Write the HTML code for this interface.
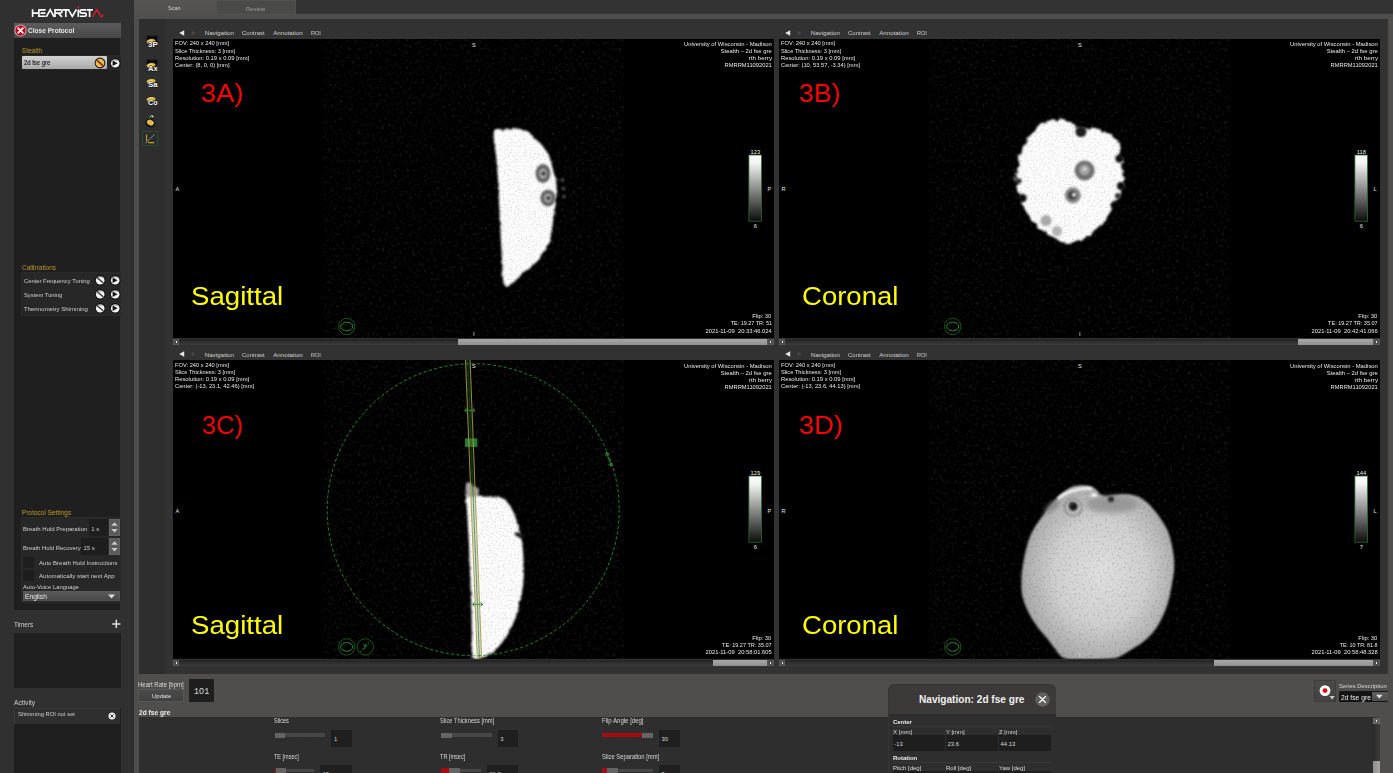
<!DOCTYPE html>
<html><head><meta charset="utf-8"><title>HeartVista</title>
<style>
html,body{margin:0;padding:0}
body{width:1393px;height:773px;position:relative;overflow:hidden;background:#303030;font-family:"Liberation Sans",sans-serif;}
span{display:inline-block}
</style></head>
<body>
<div style="position:absolute;left:134.20px;top:0.00px;width:1258.80px;height:773.00px;background:#4f4e4c;"></div>
<div style="position:absolute;left:134.20px;top:0.00px;width:81.80px;height:19.30px;background:linear-gradient(#565553,#4f4e4c);"></div>
<div style="position:absolute;left:296.00px;top:0.00px;width:1097.00px;height:14.40px;background:#333;"></div>
<div style="position:absolute;left:215.60px;top:0.00px;width:80.40px;height:14.60px;background:#4a4a48;box-shadow:inset 0 0 0 0.7px #555452"></div>
<span style="position:absolute;left:168.10px;transform-origin:0 50%;top:5.30px;font-size:6.2px;line-height:1;color:#d6d6d6;transform:scaleX(0.8986);white-space:pre;">Scan</span>
<span style="position:absolute;left:246.00px;transform-origin:0 50%;top:5.60px;font-size:6.2px;line-height:1;color:#9c9c9c;transform:scaleX(0.9494);white-space:pre;">Review</span>
<div style="position:absolute;left:139.00px;top:19.30px;width:1249.00px;height:654.60px;background:#323232;"></div>
<div style="position:absolute;left:139.00px;top:19.30px;width:25.50px;height:654.60px;background:#2e2e2e;"></div>
<div style="position:absolute;left:164.50px;top:19.30px;width:1223.50px;height:654.60px;background:#323232;"></div>
<svg style="position:absolute;left:143.6px;top:34.2px" width="16" height="16" viewBox="-8 -8 16 16"><rect x="-5.4" y="-6.2" width="10.8" height="6" fill="#0a0a0a"/><ellipse cx="-0.8" cy="-0.9" rx="4.5" ry="2.2" transform="rotate(-10)" fill="#d9b53a"/><ellipse cx="-1.4" cy="-1.4" rx="2.6" ry="1.2" transform="rotate(-12)" fill="#f0d469"/><text x="0.9" y="4.6" font-family="Liberation Sans" font-weight="700" font-size="7.0" text-anchor="middle" fill="#fff" stroke="#111" stroke-width="0.9" paint-order="stroke" textLength="9.6" lengthAdjust="spacingAndGlyphs">3P</text></svg>
<svg style="position:absolute;left:143.8px;top:57.599999999999994px" width="16" height="16" viewBox="-8 -8 16 16"><rect x="-5.4" y="-6.2" width="10.8" height="6" fill="#0a0a0a"/><ellipse cx="-0.8" cy="-0.9" rx="4.5" ry="2.2" transform="rotate(-10)" fill="#d9b53a"/><ellipse cx="-1.4" cy="-1.4" rx="2.6" ry="1.2" transform="rotate(-12)" fill="#f0d469"/><text x="0.9" y="4.6" font-family="Liberation Sans" font-weight="700" font-size="7.0" text-anchor="middle" fill="#fff" stroke="#111" stroke-width="0.9" paint-order="stroke" textLength="9.6" lengthAdjust="spacingAndGlyphs">Ax</text></svg>
<svg style="position:absolute;left:143.8px;top:74.4px" width="16" height="16" viewBox="-8 -8 16 16"><ellipse cx="-0.8" cy="-0.9" rx="4.5" ry="2.2" transform="rotate(-10)" fill="#d9b53a"/><ellipse cx="-1.4" cy="-1.4" rx="2.6" ry="1.2" transform="rotate(-12)" fill="#f0d469"/><text x="0.9" y="4.6" font-family="Liberation Sans" font-weight="700" font-size="7.0" text-anchor="middle" fill="#fff" stroke="#111" stroke-width="0.9" paint-order="stroke" textLength="9.6" lengthAdjust="spacingAndGlyphs">Sa</text></svg>
<svg style="position:absolute;left:143.8px;top:92px" width="16" height="16" viewBox="-8 -8 16 16"><ellipse cx="-0.8" cy="-0.9" rx="4.5" ry="2.2" transform="rotate(-10)" fill="#d9b53a"/><ellipse cx="-1.4" cy="-1.4" rx="2.6" ry="1.2" transform="rotate(-12)" fill="#f0d469"/><text x="0.9" y="4.6" font-family="Liberation Sans" font-weight="700" font-size="7.0" text-anchor="middle" fill="#fff" stroke="#111" stroke-width="0.9" paint-order="stroke" textLength="9.6" lengthAdjust="spacingAndGlyphs">Co</text></svg>
<svg style="position:absolute;left:143px;top:112px" width="16" height="18" viewBox="143 112 16 18">
<ellipse cx="150.4" cy="123" rx="4.2" ry="3.4" transform="rotate(25 150.4 123)" fill="#0c0c0c" stroke="#0c0c0c" stroke-width="1.6"/>
<ellipse cx="150.4" cy="122.6" rx="3.6" ry="2.7" transform="rotate(25 150.4 122.6)" fill="#e0bd3e"/>
<path d="M149.6 117.4Q151 114.6 153.4 116.4" stroke="#ddd" stroke-width="0.9" fill="none"/><path d="M152.4 115.2L153.8 116.8L151.8 117.4Z" fill="#ddd"/></svg>
<div style="position:absolute;left:142.10px;top:130.90px;width:15.90px;height:15.40px;background:#2b2b2b;border-radius:1px;box-shadow:inset 0 0 0 0.8px #28582c"></div>
<svg style="position:absolute;left:142px;top:131px" width="16" height="16" viewBox="142 131 16 16">
<path d="M146.6 134.4V141.2M148.2 142.6H154.2" stroke="#c2a22e" stroke-width="1.1" fill="none"/><path d="M145.4 143.4L154.6 134.2" stroke="#b8b8b8" stroke-width="0.7"/></svg>
<span style="position:absolute;left:138.40px;transform-origin:0 50%;top:681.90px;font-size:6.4px;line-height:1;color:#d8d8d8;transform:scaleX(0.9378);white-space:pre;">Heart Rate [bpm]</span>
<div style="position:absolute;left:138.40px;top:689.20px;width:45.90px;height:13.30px;background:linear-gradient(#4b4b4b,#404040);border-radius:1.5px;box-shadow:inset 0 0 0 0.7px #5e5e5c"></div>
<span style="position:absolute;left:151.80px;transform-origin:0 50%;top:693.40px;font-size:6.2px;line-height:1;color:#e0e0e0;transform:scaleX(0.9653);white-space:pre;">Update</span>
<div style="position:absolute;left:189.30px;top:679.40px;width:24.80px;height:22.50px;background:#1e1e1e;"></div>
<span style="position:absolute;left:193.90px;transform-origin:0 50%;top:687.30px;font-size:9.3px;line-height:1;color:#dcdcdc;font-family:'Liberation Mono';transform:scaleX(0.9078);white-space:pre;">1O1</span>
<span style="position:absolute;left:139.30px;transform-origin:0 50%;top:708.70px;font-size:7.2px;line-height:1;color:#ececec;font-weight:700;transform:scaleX(0.9231);white-space:pre;">2d fse gre</span>
<div style="position:absolute;left:139.00px;top:716.80px;width:1241.00px;height:56.30px;background:#2e2e2e;"></div>
<span style="position:absolute;left:273.90px;transform-origin:0 50%;top:718.00px;font-size:6.7px;line-height:1;color:#d8d8d8;transform:scaleX(0.8336);white-space:pre;">Slices</span>
<div style="position:absolute;left:274.60px;top:733.30px;width:50.40px;height:3.90px;background:#474747;"></div><div style="position:absolute;left:274.60px;top:732.80px;width:10.80px;height:5.00px;background:#646464;"></div><div style="position:absolute;left:280.70px;top:740.20px;width:0.70px;height:1.80px;background:#2a2a2a;"></div><div style="position:absolute;left:293.90px;top:740.20px;width:0.70px;height:1.80px;background:#2a2a2a;"></div><div style="position:absolute;left:307.60px;top:740.20px;width:0.70px;height:1.80px;background:#2a2a2a;"></div><div style="position:absolute;left:320.40px;top:740.20px;width:0.70px;height:1.80px;background:#2a2a2a;"></div>
<div style="position:absolute;left:331.40px;top:729.50px;width:20.30px;height:17.10px;background:#1f1f1f;"></div>
<span style="position:absolute;left:334.00px;transform-origin:0 50%;top:736.80px;font-size:5.9px;line-height:1;color:#d8d8d8;white-space:pre;">1</span>
<span style="position:absolute;left:273.90px;transform-origin:0 50%;top:753.50px;font-size:6.7px;line-height:1;color:#d8d8d8;transform:scaleX(0.8257);white-space:pre;">TE [msec]</span>
<div style="position:absolute;left:274.60px;top:768.60px;width:39.40px;height:3.90px;background:#474747;"></div><div style="position:absolute;left:274.60px;top:768.30px;width:0.90px;height:4.40px;background:#a80a12;"></div><div style="position:absolute;left:275.50px;top:768.10px;width:10.50px;height:5.00px;background:#646464;"></div>
<div style="position:absolute;left:320.30px;top:765.00px;width:31.40px;height:8.00px;background:#1f1f1f;"></div>
<span style="position:absolute;left:322.80px;transform-origin:0 50%;top:772.20px;font-size:5.9px;line-height:1;color:#d8d8d8;white-space:pre;">15</span>
<span style="position:absolute;left:440.00px;transform-origin:0 50%;top:718.00px;font-size:6.7px;line-height:1;color:#d8d8d8;transform:scaleX(0.8596);white-space:pre;">Slice Thickness [mm]</span>
<div style="position:absolute;left:441.00px;top:733.30px;width:51.10px;height:3.90px;background:#474747;"></div><div style="position:absolute;left:441.00px;top:732.80px;width:10.70px;height:5.00px;background:#646464;"></div><div style="position:absolute;left:446.30px;top:740.20px;width:0.70px;height:1.80px;background:#2a2a2a;"></div><div style="position:absolute;left:487.30px;top:740.20px;width:0.70px;height:1.80px;background:#2a2a2a;"></div>
<div style="position:absolute;left:498.10px;top:729.50px;width:20.00px;height:17.10px;background:#1f1f1f;"></div>
<span style="position:absolute;left:500.20px;transform-origin:0 50%;top:736.80px;font-size:5.9px;line-height:1;color:#d8d8d8;white-space:pre;">3</span>
<span style="position:absolute;left:440.00px;transform-origin:0 50%;top:753.50px;font-size:6.7px;line-height:1;color:#d8d8d8;transform:scaleX(0.8289);white-space:pre;">TR [msec]</span>
<div style="position:absolute;left:441.00px;top:768.60px;width:40.00px;height:3.90px;background:#474747;"></div><div style="position:absolute;left:441.00px;top:768.30px;width:8.00px;height:4.40px;background:#a80a12;"></div><div style="position:absolute;left:449.00px;top:768.10px;width:11.00px;height:5.00px;background:#646464;"></div>
<div style="position:absolute;left:487.10px;top:765.00px;width:31.00px;height:8.00px;background:#1f1f1f;"></div>
<span style="position:absolute;left:489.40px;transform-origin:0 50%;top:772.20px;font-size:5.9px;line-height:1;color:#d8d8d8;white-space:pre;">81.8</span>
<span style="position:absolute;left:601.70px;transform-origin:0 50%;top:718.00px;font-size:6.7px;line-height:1;color:#d8d8d8;transform:scaleX(0.9007);white-space:pre;">Flip Angle [deg]</span>
<div style="position:absolute;left:602.40px;top:733.30px;width:50.90px;height:3.90px;background:#474747;"></div><div style="position:absolute;left:602.40px;top:733.00px;width:40.00px;height:4.40px;background:#a80a12;"></div><div style="position:absolute;left:642.40px;top:732.80px;width:10.90px;height:5.00px;background:#646464;"></div><div style="position:absolute;left:608.00px;top:740.20px;width:0.70px;height:1.80px;background:#2a2a2a;"></div><div style="position:absolute;left:610.35px;top:740.20px;width:0.70px;height:1.80px;background:#2a2a2a;"></div><div style="position:absolute;left:612.70px;top:740.20px;width:0.70px;height:1.80px;background:#2a2a2a;"></div><div style="position:absolute;left:615.05px;top:740.20px;width:0.70px;height:1.80px;background:#2a2a2a;"></div><div style="position:absolute;left:617.40px;top:740.20px;width:0.70px;height:1.80px;background:#2a2a2a;"></div><div style="position:absolute;left:619.75px;top:740.20px;width:0.70px;height:1.80px;background:#2a2a2a;"></div><div style="position:absolute;left:622.10px;top:740.20px;width:0.70px;height:1.80px;background:#2a2a2a;"></div><div style="position:absolute;left:624.45px;top:740.20px;width:0.70px;height:1.80px;background:#2a2a2a;"></div><div style="position:absolute;left:626.80px;top:740.20px;width:0.70px;height:1.80px;background:#2a2a2a;"></div><div style="position:absolute;left:629.15px;top:740.20px;width:0.70px;height:1.80px;background:#2a2a2a;"></div><div style="position:absolute;left:631.50px;top:740.20px;width:0.70px;height:1.80px;background:#2a2a2a;"></div><div style="position:absolute;left:633.85px;top:740.20px;width:0.70px;height:1.80px;background:#2a2a2a;"></div><div style="position:absolute;left:636.20px;top:740.20px;width:0.70px;height:1.80px;background:#2a2a2a;"></div><div style="position:absolute;left:638.55px;top:740.20px;width:0.70px;height:1.80px;background:#2a2a2a;"></div><div style="position:absolute;left:640.90px;top:740.20px;width:0.70px;height:1.80px;background:#2a2a2a;"></div><div style="position:absolute;left:643.25px;top:740.20px;width:0.70px;height:1.80px;background:#2a2a2a;"></div><div style="position:absolute;left:645.60px;top:740.20px;width:0.70px;height:1.80px;background:#2a2a2a;"></div><div style="position:absolute;left:647.95px;top:740.20px;width:0.70px;height:1.80px;background:#2a2a2a;"></div>
<div style="position:absolute;left:659.30px;top:729.50px;width:20.40px;height:17.10px;background:#1f1f1f;"></div>
<span style="position:absolute;left:661.50px;transform-origin:0 50%;top:736.80px;font-size:5.9px;line-height:1;color:#d8d8d8;white-space:pre;">30</span>
<span style="position:absolute;left:601.70px;transform-origin:0 50%;top:753.50px;font-size:6.7px;line-height:1;color:#d8d8d8;transform:scaleX(0.8743);white-space:pre;">Slice Separation [mm]</span>
<div style="position:absolute;left:602.40px;top:768.60px;width:50.90px;height:3.90px;background:#474747;"></div><div style="position:absolute;left:602.40px;top:768.30px;width:5.00px;height:4.40px;background:#a80a12;"></div><div style="position:absolute;left:607.40px;top:768.10px;width:10.70px;height:5.00px;background:#646464;"></div>
<div style="position:absolute;left:659.30px;top:765.00px;width:20.40px;height:8.00px;background:#1f1f1f;"></div>
<span style="position:absolute;left:661.50px;transform-origin:0 50%;top:772.20px;font-size:5.9px;line-height:1;color:#d8d8d8;white-space:pre;">3</span>
<div style="position:absolute;left:1373.30px;top:716.70px;width:6.40px;height:56.30px;background:linear-gradient(90deg,#2a2a2a,#3a3a3a);"></div>
<div style="position:absolute;left:1373.40px;top:717.80px;width:6.20px;height:6.30px;background:#5c5c5c;box-shadow:inset 0 0 0 0.6px #777"></div>
<div style="position:absolute;left:1375.70px;top:720.20px;width:1.60px;height:1.60px;background:#eee;"></div>
<div style="position:absolute;left:1373.40px;top:761.00px;width:6.20px;height:12.00px;background:linear-gradient(90deg,#8e8e8e,#a6a6a6);"></div>
<div style="position:absolute;left:1313.70px;top:679.70px;width:22.70px;height:22.30px;background:linear-gradient(#4a4a4a,#424242);border-radius:1.5px;box-shadow:inset 0 0 0 0.7px #3a3a3a"></div>
<svg style="position:absolute;left:1316px;top:682px" width="20" height="19" viewBox="1316 682 20 19">
<circle cx="1325" cy="690.6" r="5.4" fill="#fff"/><circle cx="1325" cy="690.6" r="2.4" fill="#e30613"/><path d="M1329.4 696L1334.8 696L1332.1 699.4Z" fill="#c8c8c8"/></svg>
<span style="position:absolute;left:1339.30px;transform-origin:0 50%;top:682.80px;font-size:6.2px;line-height:1;color:#d8d8d8;transform:scaleX(0.9501);white-space:pre;">Series Description</span>
<div style="position:absolute;left:1339.00px;top:691.00px;width:49.20px;height:11.20px;background:#141414;border-radius:1.5px"></div>
<div style="position:absolute;left:1371.80px;top:691.70px;width:15.80px;height:9.80px;background:linear-gradient(#5e5e5e,#4c4c4c);border-radius:0 1px 1px 0"></div>
<span style="position:absolute;left:1340.70px;transform-origin:0 50%;top:694.90px;font-size:6.8px;line-height:1;color:#ececec;transform:scaleX(0.9920);white-space:pre;">2d fse gre</span>
<svg style="position:absolute;left:1375px;top:693.4px" width="9" height="7" viewBox="0 0 9 7"><path d="M1 1.8H7.6L4.3 5.6Z" fill="#e2e2e2"/></svg>
<div style="position:absolute;left:887.90px;top:683.90px;width:168.60px;height:90.00px;background:#363535;border-radius:6px 6px 0 0"></div>
<div style="position:absolute;left:888.50px;top:684.50px;width:167.40px;height:29.60px;background:#3b3a39;border-radius:5.5px 5.5px 0 0"></div>
<div style="position:absolute;left:888.50px;top:714.10px;width:167.40px;height:60.00px;background:#2e2e2e;"></div>
<span style="position:absolute;left:919.00px;transform-origin:0 50%;top:695.40px;font-size:10.1px;line-height:1;color:#f0f0f0;font-weight:700;white-space:pre;">Navigation: 2d fse gre</span>
<svg style="position:absolute;left:1034.5px;top:691.5px" width="15" height="15" viewBox="-7.5 -7.5 15 15">
<circle r="7.2" fill="#616161"/><path d="M-3 -3L3 3M3 -3L-3 3" stroke="#fff" stroke-width="1.15" stroke-linecap="round"/></svg>
<span style="position:absolute;left:892.90px;transform-origin:0 50%;top:719.30px;font-size:6.2px;line-height:1;color:#ececec;font-weight:700;transform:scaleX(0.9624);white-space:pre;">Center</span>
<div style="position:absolute;left:892.90px;top:726.20px;width:158.20px;height:0.60px;background:#383838;"></div>
<span style="position:absolute;left:892.90px;transform-origin:0 50%;top:728.50px;font-size:6.2px;line-height:1;color:#d8d8d8;transform:scaleX(0.9780);white-space:pre;">X [mm]</span>
<span style="position:absolute;left:946.00px;transform-origin:0 50%;top:728.50px;font-size:6.2px;line-height:1;color:#d8d8d8;transform:scaleX(0.9529);white-space:pre;">Y [mm]</span>
<span style="position:absolute;left:998.90px;transform-origin:0 50%;top:728.50px;font-size:6.2px;line-height:1;color:#d8d8d8;transform:scaleX(0.9541);white-space:pre;">Z [mm]</span>
<div style="position:absolute;left:892.90px;top:735.30px;width:51.90px;height:15.40px;background:#1e1e1e;"></div>
<span style="position:absolute;left:894.30px;transform-origin:0 50%;top:742.20px;font-size:5.9px;line-height:1;color:#d8d8d8;white-space:pre;">-13</span>
<div style="position:absolute;left:946.20px;top:735.30px;width:51.50px;height:15.40px;background:#1e1e1e;"></div>
<span style="position:absolute;left:947.60px;transform-origin:0 50%;top:742.20px;font-size:5.9px;line-height:1;color:#d8d8d8;white-space:pre;">23.6</span>
<div style="position:absolute;left:999.20px;top:735.30px;width:51.90px;height:15.40px;background:#1e1e1e;"></div>
<span style="position:absolute;left:1000.60px;transform-origin:0 50%;top:742.20px;font-size:5.9px;line-height:1;color:#d8d8d8;white-space:pre;">44.13</span>
<span style="position:absolute;left:892.90px;transform-origin:0 50%;top:755.00px;font-size:6.2px;line-height:1;color:#ececec;font-weight:700;transform:scaleX(0.9666);white-space:pre;">Rotation</span>
<div style="position:absolute;left:892.90px;top:762.00px;width:158.20px;height:0.60px;background:#383838;"></div>
<span style="position:absolute;left:892.90px;transform-origin:0 50%;top:764.50px;font-size:6.2px;line-height:1;color:#d8d8d8;transform:scaleX(0.9694);white-space:pre;">Pitch [deg]</span>
<span style="position:absolute;left:946.00px;transform-origin:0 50%;top:764.50px;font-size:6.2px;line-height:1;color:#d8d8d8;transform:scaleX(0.9659);white-space:pre;">Roll [deg]</span>
<span style="position:absolute;left:998.90px;transform-origin:0 50%;top:764.50px;font-size:6.2px;line-height:1;color:#d8d8d8;transform:scaleX(0.9589);white-space:pre;">Yaw [deg]</span>
<div style="position:absolute;left:892.90px;top:771.20px;width:51.90px;height:3.00px;background:#1e1e1e;"></div>
<div style="position:absolute;left:946.20px;top:771.20px;width:51.50px;height:3.00px;background:#1e1e1e;"></div>
<div style="position:absolute;left:999.20px;top:771.20px;width:51.90px;height:3.00px;background:#1e1e1e;"></div>
<svg width="0" height="0" style="position:absolute"><defs>
<filter id="bgn" x="0" y="0" width="100%" height="100%" color-interpolation-filters="sRGB">
<feTurbulence type="fractalNoise" baseFrequency="0.33" numOctaves="2" seed="7"/>
<feColorMatrix type="matrix" values="0.26 0 0 0 -0.138  0.26 0 0 0 -0.138  0.26 0 0 0 -0.138  0 0 0 0 1"/>
</filter>
<filter id="blob" x="-10%" y="-10%" width="120%" height="120%" color-interpolation-filters="sRGB">
<feTurbulence type="fractalNoise" baseFrequency="0.22" numOctaves="2" seed="9" result="dn"/>
<feDisplacementMap in="SourceGraphic" in2="dn" scale="3.2" xChannelSelector="R" yChannelSelector="G" result="d"/>
<feGaussianBlur in="d" stdDeviation="1.0" result="b"/>
<feTurbulence type="fractalNoise" baseFrequency="0.6" numOctaves="2" seed="11" result="n"/>
<feColorMatrix in="n" type="matrix" values="0.4 0 0 0 0.8  0.4 0 0 0 0.8  0.4 0 0 0 0.8  0 0 0 0 1" result="ng"/>
<feComposite in="b" in2="ng" operator="arithmetic" k1="1" k2="0" k3="0" k4="0"/>
</filter>
<filter id="blobR" x="-10%" y="-10%" width="120%" height="120%" color-interpolation-filters="sRGB">
<feTurbulence type="fractalNoise" baseFrequency="0.16" numOctaves="2" seed="4" result="dn"/>
<feDisplacementMap in="SourceGraphic" in2="dn" scale="7" xChannelSelector="R" yChannelSelector="G" result="d"/>
<feGaussianBlur in="d" stdDeviation="1.1" result="b"/>
<feTurbulence type="fractalNoise" baseFrequency="0.6" numOctaves="2" seed="11" result="n"/>
<feColorMatrix in="n" type="matrix" values="0.4 0 0 0 0.8  0.4 0 0 0 0.8  0.4 0 0 0 0.8  0 0 0 0 1" result="ng"/>
<feComposite in="b" in2="ng" operator="arithmetic" k1="1" k2="0" k3="0" k4="0"/>
</filter>
<filter id="blobD" x="-10%" y="-10%" width="120%" height="120%" color-interpolation-filters="sRGB">
<feGaussianBlur in="SourceGraphic" stdDeviation="1.1" result="b"/>
<feTurbulence type="fractalNoise" baseFrequency="0.42" numOctaves="2" seed="5" result="n"/>
<feColorMatrix in="n" type="matrix" values="0.36 0 0 0 0.82  0.36 0 0 0 0.82  0.36 0 0 0 0.82  0 0 0 0 1" result="ng"/>
<feComposite in="b" in2="ng" operator="arithmetic" k1="1" k2="0" k3="0" k4="0"/>
</filter>
<filter id="soft" x="-30%" y="-30%" width="160%" height="160%"><feGaussianBlur stdDeviation="1.2"/></filter>
<filter id="soft2" x="-30%" y="-30%" width="160%" height="160%"><feGaussianBlur stdDeviation="2.5"/></filter>
<linearGradient id="sbar" x1="0" y1="0" x2="0" y2="1"><stop offset="0" stop-color="#fff"/><stop offset="0.12" stop-color="#f4f4f4"/><stop offset="1" stop-color="#0c0c0c"/></linearGradient>
<radialGradient id="gD" cx="0.52" cy="0.5" r="0.6"><stop offset="0" stop-color="#e0e0e0"/><stop offset="0.5" stop-color="#d0d0d0"/><stop offset="1" stop-color="#9c9c9c"/></radialGradient>
</defs></svg>
<svg style="position:absolute;left:178px;top:28.7px" width="22" height="8" viewBox="0 0 22 8"><path d="M1.2 4L6.2 1.2V6.8Z" fill="#e8e8e8"/><path d="M17.6 4L13.6 1.6V6.4Z" fill="#454545"/></svg>
<span style="position:absolute;left:204.70px;transform-origin:0 50%;top:30.10px;font-size:6.2px;line-height:1;color:#cfcfcf;white-space:pre;">Navigation</span>
<span style="position:absolute;left:241.70px;transform-origin:0 50%;top:30.10px;font-size:6.2px;line-height:1;color:#cfcfcf;transform:scaleX(0.9730);white-space:pre;">Contrast</span>
<span style="position:absolute;left:273.20px;transform-origin:0 50%;top:30.10px;font-size:6.2px;line-height:1;color:#cfcfcf;white-space:pre;">Annotation</span>
<span style="position:absolute;left:311.20px;transform-origin:0 50%;top:30.10px;font-size:6.2px;line-height:1;color:#cfcfcf;transform:scaleX(0.8890);white-space:pre;">ROI</span>
<svg style="position:absolute;left:173px;top:38.9px" width="601.0" height="299.4" viewBox="0 0 601.0 299.4"><rect width="601.0" height="299.4" fill="#000"/><rect x="150.5" y="0" width="300" height="299.4" fill="#000" filter="url(#bgn)"/><path d="M321.0 92.6C322.4 87.8 328.2 91.1 332.0 90.6C335.8 90.1 340.2 89.1 344.0 89.6C347.8 90.1 351.7 91.7 355.0 93.6C358.3 95.5 361.2 98.3 364.0 101.1C366.8 103.8 369.8 107.1 372.0 110.1C374.2 113.1 375.7 115.6 377.0 119.1C378.3 122.6 378.9 126.6 380.0 131.1C381.1 135.6 383.0 141.1 383.5 146.1C384.0 151.1 383.3 156.6 383.0 161.1C382.7 165.6 382.1 168.9 381.5 173.1C380.9 177.3 380.3 181.1 379.5 186.1C378.7 191.1 378.1 198.4 376.5 203.1C374.9 207.8 372.2 210.8 370.0 214.1C367.8 217.4 365.8 220.6 363.5 223.1C361.2 225.6 358.4 227.1 356.0 229.1C353.6 231.1 351.3 233.0 349.0 235.1C346.7 237.2 344.1 239.6 342.0 241.6C339.9 243.6 338.2 246.3 336.5 247.1C334.8 247.9 333.1 247.8 332.0 246.6C330.9 245.4 330.5 244.3 330.0 240.1C329.5 235.8 329.3 227.3 329.0 221.1C328.7 214.9 328.4 211.1 328.0 203.1C327.6 195.1 326.9 182.6 326.5 173.1C326.1 163.6 325.8 155.1 325.3 146.1C324.8 137.1 324.0 128.0 323.3 119.1C322.6 110.2 319.6 97.3 321.0 92.6Z" fill="#fdfdfd" filter="url(#blob)"/><ellipse cx="370" cy="134.5" rx="7.4" ry="9.6" fill="#5f5f5f" filter="url(#soft)"/><ellipse cx="370" cy="134.5" rx="4.07" ry="5.28" fill="#a9a9a9" filter="url(#soft)"/><ellipse cx="370.5" cy="134.5" rx="2.22" ry="2.112" fill="#333" filter="url(#soft)"/><ellipse cx="375" cy="159.1" rx="7.6" ry="8.4" fill="#5f5f5f" filter="url(#soft)"/><ellipse cx="375" cy="159.1" rx="4.18" ry="4.620000000000001" fill="#a9a9a9" filter="url(#soft)"/><ellipse cx="375.5" cy="159.1" rx="2.28" ry="1.848" fill="#333" filter="url(#soft)"/><circle cx="389.5" cy="141.1" r="1.8" fill="#555" filter="url(#soft)"/><circle cx="390.5" cy="149.6" r="1.8" fill="#555" filter="url(#soft)"/><circle cx="391" cy="157.6" r="1.8" fill="#555" filter="url(#soft)"/><rect x="575.9" y="116" width="12.7" height="66.2" fill="url(#sbar)" stroke="#2c6a30" stroke-width="0.8"/><circle cx="173.7" cy="287.5" r="8.2" fill="none" stroke="#1f6a24" stroke-width="0.8"/><ellipse cx="173.7" cy="287.5" rx="6.1" ry="4.3" fill="none" stroke="#2a8a30" stroke-width="1"/></svg>
<span style="position:absolute;left:174.90px;transform-origin:0 50%;top:40.30px;font-size:6.2px;line-height:1;color:#e8e8e8;transform:scaleX(0.9218);white-space:pre;">FOV: 240 x 240 [mm]</span>
<span style="position:absolute;left:174.90px;transform-origin:0 50%;top:47.50px;font-size:6.2px;line-height:1;color:#e8e8e8;transform:scaleX(0.9227);white-space:pre;">Slice Thickness: 3 [mm]</span>
<span style="position:absolute;left:174.90px;transform-origin:0 50%;top:54.70px;font-size:6.2px;line-height:1;color:#e8e8e8;transform:scaleX(0.9415);white-space:pre;">Resolution: 0.19 x 0.09 [mm]</span>
<span style="position:absolute;left:174.90px;transform-origin:0 50%;top:62.00px;font-size:6.2px;line-height:1;color:#e8e8e8;transform:scaleX(0.9267);white-space:pre;">Center: (8, 0, 0) [mm]</span>
<span style="position:absolute;right:621.20px;transform-origin:100% 50%;top:41.20px;font-size:6.2px;line-height:1;color:#e8e8e8;transform:scaleX(0.9460);white-space:pre;">University of Wisconsin - Madison</span>
<span style="position:absolute;right:621.20px;transform-origin:100% 50%;top:48.20px;font-size:6.2px;line-height:1;color:#e8e8e8;transform:scaleX(0.9485);white-space:pre;">Stealth – 2d fse gre</span>
<span style="position:absolute;right:621.20px;transform-origin:100% 50%;top:55.20px;font-size:6.2px;line-height:1;color:#e8e8e8;transform:scaleX(1.0137);white-space:pre;">rth berry</span>
<span style="position:absolute;right:621.20px;transform-origin:100% 50%;top:62.20px;font-size:6.2px;line-height:1;color:#e8e8e8;transform:scaleX(0.9295);white-space:pre;">RMRRM11092021</span>
<span style="position:absolute;right:621.30px;transform-origin:100% 50%;top:313.20px;font-size:6.2px;line-height:1;color:#e8e8e8;transform:scaleX(0.9345);white-space:pre;">Flip: 30</span>
<span style="position:absolute;right:621.30px;transform-origin:100% 50%;top:320.30px;font-size:6.2px;line-height:1;color:#e8e8e8;transform:scaleX(0.8769);white-space:pre;">TE: 19.27 TR: 51</span>
<span style="position:absolute;right:621.30px;transform-origin:100% 50%;top:327.60px;font-size:6.2px;line-height:1;color:#e8e8e8;transform:scaleX(0.9365);white-space:pre;">2021-11-09  20:33:46.024</span>
<span style="position:absolute;left:471.90px;transform-origin:0 50%;top:42.90px;font-size:5.6px;line-height:1;color:#e8e8e8;white-space:pre;">S</span>
<span style="position:absolute;left:472.90px;transform-origin:0 50%;top:331.90px;font-size:5.6px;line-height:1;color:#e8e8e8;white-space:pre;">I</span>
<span style="position:absolute;left:175.60px;transform-origin:0 50%;top:187.30px;font-size:5.6px;line-height:1;color:#e8e8e8;white-space:pre;">A</span>
<span style="position:absolute;left:767.60px;transform-origin:0 50%;top:187.30px;font-size:5.6px;line-height:1;color:#e8e8e8;white-space:pre;">P</span>
<span style="position:absolute;left:750.46px;transform-origin:50% 50%;top:149.70px;font-size:5.8px;line-height:1;color:#e8e8e8;white-space:pre;">123</span>
<span style="position:absolute;left:753.69px;transform-origin:50% 50%;top:223.50px;font-size:5.8px;line-height:1;color:#e8e8e8;white-space:pre;">6</span>
<span style="position:absolute;left:200.90px;transform-origin:0 50%;top:81.20px;font-size:25.9px;line-height:1;color:#f00;transform:scaleX(1.0569);white-space:pre;">3A)</span>
<span style="position:absolute;left:190.90px;transform-origin:0 50%;top:283.10px;font-size:26px;line-height:1;color:#ff0;transform:scaleX(1.0632);white-space:pre;">Sagittal</span>
<div style="position:absolute;left:173.00px;top:339.00px;width:601.00px;height:5.90px;background:linear-gradient(#222,#3c3c3c);"></div>
<div style="position:absolute;left:457.60px;top:339.00px;width:309.50px;height:5.90px;background:linear-gradient(#a8a8a8,#909090);"></div>
<div style="position:absolute;left:173.30px;top:339.00px;width:6.20px;height:5.90px;background:#4c4c4c;box-shadow:inset 0 0 0 0.6px #5e5e5e"></div>
<div style="position:absolute;left:175.50px;top:341.10px;width:1.70px;height:1.70px;background:#eee;"></div>
<div style="position:absolute;left:767.40px;top:339.00px;width:6.20px;height:5.90px;background:#4c4c4c;box-shadow:inset 0 0 0 0.6px #5e5e5e"></div>
<div style="position:absolute;left:769.60px;top:341.10px;width:1.70px;height:1.70px;background:#eee;"></div>
<svg style="position:absolute;left:784px;top:28.7px" width="22" height="8" viewBox="0 0 22 8"><path d="M1.2 4L6.2 1.2V6.8Z" fill="#e8e8e8"/><path d="M17.6 4L13.6 1.6V6.4Z" fill="#454545"/></svg>
<span style="position:absolute;left:810.70px;transform-origin:0 50%;top:30.10px;font-size:6.2px;line-height:1;color:#cfcfcf;white-space:pre;">Navigation</span>
<span style="position:absolute;left:847.70px;transform-origin:0 50%;top:30.10px;font-size:6.2px;line-height:1;color:#cfcfcf;transform:scaleX(0.9730);white-space:pre;">Contrast</span>
<span style="position:absolute;left:879.20px;transform-origin:0 50%;top:30.10px;font-size:6.2px;line-height:1;color:#cfcfcf;white-space:pre;">Annotation</span>
<span style="position:absolute;left:917.20px;transform-origin:0 50%;top:30.10px;font-size:6.2px;line-height:1;color:#cfcfcf;transform:scaleX(0.8890);white-space:pre;">ROI</span>
<svg style="position:absolute;left:779px;top:38.9px" width="601.0" height="299.4" viewBox="0 0 601.0 299.4"><rect width="601.0" height="299.4" fill="#000"/><rect x="150.5" y="0" width="300" height="299.4" fill="#000" filter="url(#bgn)"/><path d="M271.0 80.8C274.6 80.0 279.7 80.1 283.5 80.8C287.3 81.5 290.9 83.7 294.0 85.1C297.1 86.5 299.3 88.3 302.0 89.1C304.7 89.8 307.6 89.3 310.4 89.6C313.2 89.9 316.2 90.3 319.0 91.1C321.8 91.8 324.5 92.8 327.0 94.1C329.5 95.3 331.9 96.8 334.0 98.6C336.1 100.3 338.1 101.7 339.4 104.6C340.7 107.5 341.3 112.0 342.0 116.1C342.7 120.2 343.2 125.6 343.5 129.4C343.8 133.2 344.0 136.0 344.0 139.1C344.0 142.2 344.2 145.1 343.5 148.1C342.8 151.1 341.4 154.3 340.0 157.1C338.6 159.8 336.8 161.6 335.0 164.6C333.2 167.6 331.5 171.7 329.5 175.1C327.5 178.5 325.0 182.3 322.8 185.1C320.5 187.9 318.4 190.0 316.0 192.1C313.6 194.2 311.3 196.0 308.3 197.7C305.3 199.4 301.4 201.1 298.0 202.1C294.6 203.1 290.6 204.0 287.6 203.9C284.6 203.8 282.4 202.6 280.0 201.6C277.6 200.6 275.7 199.3 273.0 197.7C270.3 196.1 266.8 194.2 264.0 192.1C261.2 190.0 259.0 187.9 256.5 185.1C254.0 182.3 251.1 178.5 249.0 175.1C246.9 171.7 245.5 168.1 244.0 164.6C242.5 161.1 241.0 157.5 240.0 154.1C239.0 150.7 238.4 146.9 238.0 143.9C237.6 140.9 237.5 138.5 237.5 136.1C237.5 133.7 237.5 132.4 238.0 129.4C238.5 126.4 239.5 121.5 240.5 118.1C241.5 114.6 242.7 111.7 244.0 108.7C245.3 105.7 246.8 102.9 248.5 100.1C250.2 97.3 252.2 94.5 254.5 92.1C256.8 89.7 259.2 87.5 262.0 85.6C264.8 83.7 267.4 81.6 271.0 80.8Z" fill="#fdfdfd" filter="url(#blobR)"/><circle cx="302" cy="92.6" r="5.5" fill="#1a1a1a" filter="url(#soft)"/><circle cx="340.5" cy="119.6" r="4.2" fill="#111" filter="url(#soft)"/><circle cx="342" cy="147.1" r="4" fill="#111" filter="url(#soft)"/><circle cx="243.5" cy="159.1" r="4.2" fill="#111" filter="url(#soft)"/><circle cx="240" cy="142.1" r="2.5" fill="#222" filter="url(#soft)"/><circle cx="339" cy="157.1" r="3" fill="#333" filter="url(#soft)"/><circle cx="267" cy="181.6" r="5.5" fill="#a8a8a8" filter="url(#soft)"/><circle cx="278" cy="192.1" r="5" fill="#b4b4b4" filter="url(#soft)"/><circle cx="305.5999999999999" cy="131.5" r="10" fill="#6e6e6e" filter="url(#soft)"/><circle cx="305.5999999999999" cy="130.9" r="5.3" fill="#a5a5a5" filter="url(#soft)"/><circle cx="305.5999999999999" cy="130.1" r="1.6" fill="#e8e8e8" filter="url(#soft)"/><circle cx="293.79999999999995" cy="156.29999999999998" r="8" fill="#858585" filter="url(#soft)"/><circle cx="293.29999999999995" cy="156.29999999999998" r="4.3" fill="#3c3c3c" filter="url(#soft)"/><circle cx="295" cy="155.7" r="2" fill="#f4f4f4" filter="url(#soft)"/><rect x="575.9" y="116" width="12.7" height="66.2" fill="url(#sbar)" stroke="#2c6a30" stroke-width="0.8"/><circle cx="173.7" cy="287.5" r="8.2" fill="none" stroke="#1f6a24" stroke-width="0.8"/><ellipse cx="173.7" cy="287.5" rx="6.1" ry="4.3" fill="none" stroke="#2a8a30" stroke-width="1"/></svg>
<span style="position:absolute;left:780.90px;transform-origin:0 50%;top:40.30px;font-size:6.2px;line-height:1;color:#e8e8e8;transform:scaleX(0.9218);white-space:pre;">FOV: 240 x 240 [mm]</span>
<span style="position:absolute;left:780.90px;transform-origin:0 50%;top:47.50px;font-size:6.2px;line-height:1;color:#e8e8e8;transform:scaleX(0.9227);white-space:pre;">Slice Thickness: 3 [mm]</span>
<span style="position:absolute;left:780.90px;transform-origin:0 50%;top:54.70px;font-size:6.2px;line-height:1;color:#e8e8e8;transform:scaleX(0.9415);white-space:pre;">Resolution: 0.19 x 0.09 [mm]</span>
<span style="position:absolute;left:780.90px;transform-origin:0 50%;top:62.00px;font-size:6.2px;line-height:1;color:#e8e8e8;transform:scaleX(0.9305);white-space:pre;">Center: (10, 53.57, -3.34) [mm]</span>
<span style="position:absolute;right:15.20px;transform-origin:100% 50%;top:41.20px;font-size:6.2px;line-height:1;color:#e8e8e8;transform:scaleX(0.9460);white-space:pre;">University of Wisconsin - Madison</span>
<span style="position:absolute;right:15.20px;transform-origin:100% 50%;top:48.20px;font-size:6.2px;line-height:1;color:#e8e8e8;transform:scaleX(0.9485);white-space:pre;">Stealth – 2d fse gre</span>
<span style="position:absolute;right:15.20px;transform-origin:100% 50%;top:55.20px;font-size:6.2px;line-height:1;color:#e8e8e8;transform:scaleX(1.0137);white-space:pre;">rth berry</span>
<span style="position:absolute;right:15.20px;transform-origin:100% 50%;top:62.20px;font-size:6.2px;line-height:1;color:#e8e8e8;transform:scaleX(0.9295);white-space:pre;">RMRRM11092021</span>
<span style="position:absolute;right:15.30px;transform-origin:100% 50%;top:313.20px;font-size:6.2px;line-height:1;color:#e8e8e8;transform:scaleX(0.9345);white-space:pre;">Flip: 30</span>
<span style="position:absolute;right:15.30px;transform-origin:100% 50%;top:320.30px;font-size:6.2px;line-height:1;color:#e8e8e8;transform:scaleX(0.8902);white-space:pre;">TE: 19.27 TR: 35.07</span>
<span style="position:absolute;right:15.30px;transform-origin:100% 50%;top:327.60px;font-size:6.2px;line-height:1;color:#e8e8e8;transform:scaleX(0.9365);white-space:pre;">2021-11-09  20:42:41.066</span>
<span style="position:absolute;left:1077.90px;transform-origin:0 50%;top:42.90px;font-size:5.6px;line-height:1;color:#e8e8e8;white-space:pre;">S</span>
<span style="position:absolute;left:1078.90px;transform-origin:0 50%;top:331.90px;font-size:5.6px;line-height:1;color:#e8e8e8;white-space:pre;">I</span>
<span style="position:absolute;left:781.60px;transform-origin:0 50%;top:187.30px;font-size:5.6px;line-height:1;color:#e8e8e8;white-space:pre;">R</span>
<span style="position:absolute;left:1373.60px;transform-origin:0 50%;top:187.30px;font-size:5.6px;line-height:1;color:#e8e8e8;white-space:pre;">L</span>
<span style="position:absolute;left:1356.68px;transform-origin:50% 50%;top:149.70px;font-size:5.8px;line-height:1;color:#e8e8e8;white-space:pre;">118</span>
<span style="position:absolute;left:1359.69px;transform-origin:50% 50%;top:223.50px;font-size:5.8px;line-height:1;color:#e8e8e8;white-space:pre;">6</span>
<span style="position:absolute;left:798.60px;transform-origin:0 50%;top:81.20px;font-size:25.9px;line-height:1;color:#f00;transform:scaleX(1.0346);white-space:pre;">3B)</span>
<span style="position:absolute;left:802.10px;transform-origin:0 50%;top:283.10px;font-size:26px;line-height:1;color:#ff0;transform:scaleX(1.0587);white-space:pre;">Coronal</span>
<div style="position:absolute;left:779.00px;top:339.00px;width:601.00px;height:5.90px;background:linear-gradient(#222,#3c3c3c);"></div>
<div style="position:absolute;left:1297.60px;top:339.00px;width:75.50px;height:5.90px;background:linear-gradient(#a8a8a8,#909090);"></div>
<div style="position:absolute;left:779.30px;top:339.00px;width:6.20px;height:5.90px;background:#4c4c4c;box-shadow:inset 0 0 0 0.6px #5e5e5e"></div>
<div style="position:absolute;left:781.50px;top:341.10px;width:1.70px;height:1.70px;background:#eee;"></div>
<div style="position:absolute;left:1373.40px;top:339.00px;width:6.20px;height:5.90px;background:#4c4c4c;box-shadow:inset 0 0 0 0.6px #5e5e5e"></div>
<div style="position:absolute;left:1375.60px;top:341.10px;width:1.70px;height:1.70px;background:#eee;"></div>
<svg style="position:absolute;left:178px;top:350.1px" width="22" height="8" viewBox="0 0 22 8"><path d="M1.2 4L6.2 1.2V6.8Z" fill="#e8e8e8"/><path d="M17.6 4L13.6 1.6V6.4Z" fill="#454545"/></svg>
<span style="position:absolute;left:204.70px;transform-origin:0 50%;top:351.50px;font-size:6.2px;line-height:1;color:#cfcfcf;white-space:pre;">Navigation</span>
<span style="position:absolute;left:241.70px;transform-origin:0 50%;top:351.50px;font-size:6.2px;line-height:1;color:#cfcfcf;transform:scaleX(0.9730);white-space:pre;">Contrast</span>
<span style="position:absolute;left:273.20px;transform-origin:0 50%;top:351.50px;font-size:6.2px;line-height:1;color:#cfcfcf;white-space:pre;">Annotation</span>
<span style="position:absolute;left:311.20px;transform-origin:0 50%;top:351.50px;font-size:6.2px;line-height:1;color:#cfcfcf;transform:scaleX(0.8890);white-space:pre;">ROI</span>
<svg style="position:absolute;left:173px;top:360.3px" width="601.0" height="298.8" viewBox="0 0 601.0 298.8"><rect width="601.0" height="298.8" fill="#000"/><rect x="150.5" y="0" width="300" height="298.8" fill="#000" filter="url(#bgn)"/><path d="M294.0 134.7C295.0 134.7 297.1 133.6 299.0 133.7C300.9 133.8 303.3 134.7 305.5 135.2C307.7 135.7 309.8 136.5 312.4 136.7C315.0 136.9 318.1 135.9 321.0 136.2C323.9 136.4 327.2 137.3 329.5 138.2C331.8 139.1 333.1 140.2 334.5 141.7C335.9 143.2 336.8 144.9 338.0 147.2C339.2 149.5 340.8 152.7 342.0 155.7C343.2 158.7 344.1 162.0 345.0 165.2C345.9 168.4 346.8 171.4 347.5 174.7C348.2 178.0 348.9 180.8 349.4 185.0C349.9 189.2 350.3 194.9 350.5 199.7C350.7 204.4 350.9 209.2 350.8 213.5C350.7 217.8 350.5 221.9 350.0 225.7C349.5 229.5 348.8 232.3 348.0 236.3C347.2 240.3 346.2 245.5 345.0 249.7C343.8 253.9 342.4 257.9 340.9 261.7C339.4 265.4 337.9 268.9 336.0 272.2C334.1 275.5 331.7 278.9 329.5 281.7C327.3 284.5 325.4 286.9 323.0 289.2C320.6 291.4 318.0 293.8 315.3 295.2C312.6 296.6 309.6 297.4 307.0 297.7C304.4 298.0 301.0 301.9 299.6 297.2C298.2 292.5 299.0 278.9 298.8 269.7C298.6 260.4 298.5 251.2 298.2 241.7C297.9 232.2 297.4 222.2 297.0 212.7C296.6 203.2 296.3 192.2 296.0 184.7C295.7 177.2 295.3 173.4 295.0 167.7C294.7 162.0 294.4 156.4 294.0 150.7C293.6 145.0 292.8 136.4 292.8 133.7C292.8 131.0 293.0 134.7 294.0 134.7Z" fill="#fdfdfd" filter="url(#blob)"/><ellipse cx="346.5" cy="175.2" rx="5" ry="2.2" transform="rotate(25 346.5 175.2)" fill="#151515" filter="url(#soft)"/><path d="M293.2 122.69999999999999L297 122.19999999999999L300 125.69999999999999L305.5 128.2L306 131.7L304 136.7L294 136.7L292.6 129.7Z" fill="#a6a6a6" filter="url(#soft)"/><circle cx="300.2" cy="149.7" r="146" fill="none" stroke="#2f8f35" stroke-width="0.9" stroke-dasharray="3.2 2.2"/><rect x="291.9" y="78.39999999999998" width="12.5" height="8.5" fill="#2a8434" opacity="0.92"/><path d="M292.5 0.0L304.3 297.49999999999994L308.59999999999997 297.49999999999994L297.1 0.0" fill="rgba(50,130,60,0.2)" stroke="#a99a34" stroke-width="0.9"/><line x1="294.8" y1="0.0" x2="306.45" y2="297.49999999999994" stroke="#1c4a26" stroke-width="0.9" opacity="0.6"/><path d="M291.8 50.30000000000001H301.8M293.8 48.30000000000001L291.6 50.30000000000001L293.8 52.30000000000001M299.8 48.30000000000001L302.0 50.30000000000001L299.8 52.30000000000001" stroke="#2f8f35" stroke-width="1" fill="none"/><path d="M299.6 244.3H309.6M301.6 242.3L299.40000000000003 244.3L301.6 246.3M307.6 242.3L309.8 244.3L307.6 246.3" stroke="#2f8f35" stroke-width="1" fill="none"/><path d="M433.29999999999995 92.19999999999999L438.4 106.19999999999999M432.6 95.69999999999999L433.29999999999995 92.19999999999999L436.20000000000005 94.30000000000001M435.4 104.30000000000001L438.4 106.19999999999999L439 102.69999999999999" stroke="#2f8f35" stroke-width="1" fill="none"/><rect x="575.9" y="116" width="12.7" height="66.2" fill="url(#sbar)" stroke="#2c6a30" stroke-width="0.8"/><circle cx="173.7" cy="286.90000000000003" r="8.2" fill="none" stroke="#1f6a24" stroke-width="0.8"/><ellipse cx="173.7" cy="286.90000000000003" rx="6.1" ry="4.3" fill="none" stroke="#2a8a30" stroke-width="1"/><circle cx="192.2" cy="286.90000000000003" r="8.2" fill="none" stroke="#1f6a24" stroke-width="0.8"/><path d="M186.8 292.50000000000006L197.8 281.50000000000006" stroke="#2a8a30" stroke-width="0.9" stroke-dasharray="2.4 1.4"/><path d="M190 284.1L192 286.50000000000006L193.6 283.50000000000006M192 286.50000000000006L191 289.3" stroke="#2a8a30" stroke-width="0.9" fill="none"/></svg>
<span style="position:absolute;left:174.90px;transform-origin:0 50%;top:361.70px;font-size:6.2px;line-height:1;color:#e8e8e8;transform:scaleX(0.9218);white-space:pre;">FOV: 240 x 240 [mm]</span>
<span style="position:absolute;left:174.90px;transform-origin:0 50%;top:368.90px;font-size:6.2px;line-height:1;color:#e8e8e8;transform:scaleX(0.9227);white-space:pre;">Slice Thickness: 3 [mm]</span>
<span style="position:absolute;left:174.90px;transform-origin:0 50%;top:376.10px;font-size:6.2px;line-height:1;color:#e8e8e8;transform:scaleX(0.9415);white-space:pre;">Resolution: 0.19 x 0.09 [mm]</span>
<span style="position:absolute;left:174.90px;transform-origin:0 50%;top:383.40px;font-size:6.2px;line-height:1;color:#e8e8e8;transform:scaleX(0.9305);white-space:pre;">Center: (-13, 23.1, 42.46) [mm]</span>
<span style="position:absolute;right:621.20px;transform-origin:100% 50%;top:362.60px;font-size:6.2px;line-height:1;color:#e8e8e8;transform:scaleX(0.9460);white-space:pre;">University of Wisconsin - Madison</span>
<span style="position:absolute;right:621.20px;transform-origin:100% 50%;top:369.60px;font-size:6.2px;line-height:1;color:#e8e8e8;transform:scaleX(0.9485);white-space:pre;">Stealth – 2d fse gre</span>
<span style="position:absolute;right:621.20px;transform-origin:100% 50%;top:376.60px;font-size:6.2px;line-height:1;color:#e8e8e8;transform:scaleX(1.0137);white-space:pre;">rth berry</span>
<span style="position:absolute;right:621.20px;transform-origin:100% 50%;top:383.60px;font-size:6.2px;line-height:1;color:#e8e8e8;transform:scaleX(0.9295);white-space:pre;">RMRRM11092021</span>
<span style="position:absolute;right:621.30px;transform-origin:100% 50%;top:634.80px;font-size:6.2px;line-height:1;color:#e8e8e8;transform:scaleX(0.9345);white-space:pre;">Flip: 30</span>
<span style="position:absolute;right:621.30px;transform-origin:100% 50%;top:642.00px;font-size:6.2px;line-height:1;color:#e8e8e8;transform:scaleX(0.8902);white-space:pre;">TE: 19.27 TR: 35.07</span>
<span style="position:absolute;right:621.30px;transform-origin:100% 50%;top:649.20px;font-size:6.2px;line-height:1;color:#e8e8e8;transform:scaleX(0.9365);white-space:pre;">2021-11-09  20:58:01.605</span>
<span style="position:absolute;left:471.90px;transform-origin:0 50%;top:364.30px;font-size:5.6px;line-height:1;color:#e8e8e8;white-space:pre;">S</span>
<span style="position:absolute;left:472.90px;transform-origin:0 50%;top:652.70px;font-size:5.6px;line-height:1;color:#e8e8e8;white-space:pre;">I</span>
<span style="position:absolute;left:175.60px;transform-origin:0 50%;top:508.70px;font-size:5.6px;line-height:1;color:#e8e8e8;white-space:pre;">A</span>
<span style="position:absolute;left:767.60px;transform-origin:0 50%;top:508.70px;font-size:5.6px;line-height:1;color:#e8e8e8;white-space:pre;">P</span>
<span style="position:absolute;left:750.46px;transform-origin:50% 50%;top:471.10px;font-size:5.8px;line-height:1;color:#e8e8e8;white-space:pre;">129</span>
<span style="position:absolute;left:753.69px;transform-origin:50% 50%;top:544.90px;font-size:5.8px;line-height:1;color:#e8e8e8;white-space:pre;">6</span>
<span style="position:absolute;left:201.90px;transform-origin:0 50%;top:413.20px;font-size:25.9px;line-height:1;color:#f00;transform:scaleX(0.9920);white-space:pre;">3C)</span>
<span style="position:absolute;left:190.90px;transform-origin:0 50%;top:612.10px;font-size:26px;line-height:1;color:#ff0;transform:scaleX(1.0632);white-space:pre;">Sagittal</span>
<div style="position:absolute;left:173.00px;top:659.80px;width:601.00px;height:5.90px;background:linear-gradient(#222,#3c3c3c);"></div>
<div style="position:absolute;left:712.90px;top:659.80px;width:54.20px;height:5.90px;background:linear-gradient(#a8a8a8,#909090);"></div>
<div style="position:absolute;left:173.30px;top:659.80px;width:6.20px;height:5.90px;background:#4c4c4c;box-shadow:inset 0 0 0 0.6px #5e5e5e"></div>
<div style="position:absolute;left:175.50px;top:661.90px;width:1.70px;height:1.70px;background:#eee;"></div>
<div style="position:absolute;left:767.40px;top:659.80px;width:6.20px;height:5.90px;background:#4c4c4c;box-shadow:inset 0 0 0 0.6px #5e5e5e"></div>
<div style="position:absolute;left:769.60px;top:661.90px;width:1.70px;height:1.70px;background:#eee;"></div>
<svg style="position:absolute;left:784px;top:350.1px" width="22" height="8" viewBox="0 0 22 8"><path d="M1.2 4L6.2 1.2V6.8Z" fill="#e8e8e8"/><path d="M17.6 4L13.6 1.6V6.4Z" fill="#454545"/></svg>
<span style="position:absolute;left:810.70px;transform-origin:0 50%;top:351.50px;font-size:6.2px;line-height:1;color:#cfcfcf;white-space:pre;">Navigation</span>
<span style="position:absolute;left:847.70px;transform-origin:0 50%;top:351.50px;font-size:6.2px;line-height:1;color:#cfcfcf;transform:scaleX(0.9730);white-space:pre;">Contrast</span>
<span style="position:absolute;left:879.20px;transform-origin:0 50%;top:351.50px;font-size:6.2px;line-height:1;color:#cfcfcf;white-space:pre;">Annotation</span>
<span style="position:absolute;left:917.20px;transform-origin:0 50%;top:351.50px;font-size:6.2px;line-height:1;color:#cfcfcf;transform:scaleX(0.8890);white-space:pre;">ROI</span>
<svg style="position:absolute;left:779px;top:360.3px" width="601.0" height="298.8" viewBox="0 0 601.0 298.8"><rect width="601.0" height="298.8" fill="#000"/><rect x="150.5" y="0" width="300" height="298.8" fill="#000" filter="url(#bgn)"/><path d="M290.9 127.7C293.2 126.4 294.9 126.1 297.0 125.7C299.1 125.3 301.5 125.1 303.8 125.2C306.1 125.3 308.8 125.5 311.0 126.2C313.2 126.8 315.0 127.8 316.7 129.1C318.4 130.4 319.3 133.0 321.0 134.2C322.7 135.4 324.8 136.0 327.0 136.2C329.2 136.4 331.4 135.5 334.0 135.2C336.6 134.9 339.6 134.4 342.6 134.3C345.6 134.2 349.0 134.2 352.0 134.7C355.0 135.2 357.9 135.8 360.7 137.2C363.5 138.6 366.4 140.9 369.0 143.2C371.6 145.5 373.7 148.2 376.0 151.1C378.3 154.0 380.8 157.3 383.0 160.7C385.2 164.1 387.4 167.7 389.0 171.7C390.6 175.7 391.8 180.4 392.8 184.7C393.8 189.0 394.5 193.4 394.9 197.7C395.3 202.0 395.3 206.4 395.0 210.7C394.7 215.0 393.8 219.2 393.0 223.5C392.2 227.8 391.6 232.4 390.5 236.7C389.4 241.0 388.2 245.2 386.6 249.4C385.0 253.6 383.1 257.8 381.0 261.7C378.9 265.6 376.7 269.2 373.7 272.7C370.7 276.2 366.9 279.7 363.0 282.7C359.1 285.7 353.7 288.6 350.4 290.7C347.1 292.8 345.6 293.9 343.0 295.2C340.4 296.4 340.1 297.5 334.8 298.2C329.5 298.9 319.2 299.2 311.0 299.2C302.8 299.2 291.5 299.9 285.7 298.2C279.9 296.4 279.0 292.1 276.0 288.7C273.0 285.3 270.4 281.2 267.6 277.7C264.8 274.2 261.6 271.1 259.0 267.7C256.4 264.3 254.1 260.9 252.0 257.2C249.9 253.5 248.0 249.6 246.5 245.7C245.0 241.8 243.7 238.4 243.0 233.7C242.3 229.0 242.3 222.9 242.5 217.7C242.7 212.5 243.5 207.4 244.3 202.7C245.0 198.0 245.9 194.0 247.0 189.7C248.1 185.4 249.3 180.8 250.8 177.0C252.3 173.2 254.1 169.9 256.0 166.7C257.9 163.5 260.3 160.6 262.4 157.6C264.5 154.6 266.4 151.5 268.5 148.7C270.6 145.9 272.9 143.3 275.3 140.7C277.7 138.1 280.4 135.4 283.0 133.2C285.6 131.0 288.6 128.9 290.9 127.7Z" fill="url(#gD)" filter="url(#blobD)"/><ellipse cx="333" cy="144.2" rx="26" ry="8.5" fill="#8c8c8c" opacity="0.75" filter="url(#soft2)"/><ellipse cx="273" cy="146.2" rx="9" ry="3.5" transform="rotate(-40 273 146.2)" fill="#777" opacity="0.8" filter="url(#soft2)"/><circle cx="332" cy="139.2" r="3" fill="#2a2a2a" filter="url(#soft)"/><ellipse cx="315" cy="135.2" rx="3" ry="1.6" fill="#fff" filter="url(#soft)"/><path d="M279 138.7Q293 127.19999999999999 313 128.7" stroke="#f2f2f2" stroke-width="3" fill="none" filter="url(#soft)"/><circle cx="294.20000000000005" cy="147.2" r="8.6" fill="none" stroke="#7e7e7e" stroke-width="1.3" filter="url(#soft)"/><circle cx="294.29999999999995" cy="146.5" r="4.2" fill="#161616" filter="url(#soft)"/><circle cx="292.5" cy="144.2" r="1.6" fill="#333" filter="url(#soft)"/><rect x="575.9" y="116" width="12.7" height="66.2" fill="url(#sbar)" stroke="#2c6a30" stroke-width="0.8"/><circle cx="173.7" cy="286.90000000000003" r="8.2" fill="none" stroke="#1f6a24" stroke-width="0.8"/><ellipse cx="173.7" cy="286.90000000000003" rx="6.1" ry="4.3" fill="none" stroke="#2a8a30" stroke-width="1"/></svg>
<span style="position:absolute;left:780.90px;transform-origin:0 50%;top:361.70px;font-size:6.2px;line-height:1;color:#e8e8e8;transform:scaleX(0.9218);white-space:pre;">FOV: 240 x 240 [mm]</span>
<span style="position:absolute;left:780.90px;transform-origin:0 50%;top:368.90px;font-size:6.2px;line-height:1;color:#e8e8e8;transform:scaleX(0.9227);white-space:pre;">Slice Thickness: 3 [mm]</span>
<span style="position:absolute;left:780.90px;transform-origin:0 50%;top:376.10px;font-size:6.2px;line-height:1;color:#e8e8e8;transform:scaleX(0.9415);white-space:pre;">Resolution: 0.19 x 0.09 [mm]</span>
<span style="position:absolute;left:780.90px;transform-origin:0 50%;top:383.40px;font-size:6.2px;line-height:1;color:#e8e8e8;transform:scaleX(0.9305);white-space:pre;">Center: (-13, 23.6, 44.13) [mm]</span>
<span style="position:absolute;right:15.20px;transform-origin:100% 50%;top:362.60px;font-size:6.2px;line-height:1;color:#e8e8e8;transform:scaleX(0.9460);white-space:pre;">University of Wisconsin - Madison</span>
<span style="position:absolute;right:15.20px;transform-origin:100% 50%;top:369.60px;font-size:6.2px;line-height:1;color:#e8e8e8;transform:scaleX(0.9485);white-space:pre;">Stealth – 2d fse gre</span>
<span style="position:absolute;right:15.20px;transform-origin:100% 50%;top:376.60px;font-size:6.2px;line-height:1;color:#e8e8e8;transform:scaleX(1.0137);white-space:pre;">rth berry</span>
<span style="position:absolute;right:15.20px;transform-origin:100% 50%;top:383.60px;font-size:6.2px;line-height:1;color:#e8e8e8;transform:scaleX(0.9295);white-space:pre;">RMRRM11092021</span>
<span style="position:absolute;right:15.30px;transform-origin:100% 50%;top:634.80px;font-size:6.2px;line-height:1;color:#e8e8e8;transform:scaleX(0.9345);white-space:pre;">Flip: 30</span>
<span style="position:absolute;right:15.30px;transform-origin:100% 50%;top:642.00px;font-size:6.2px;line-height:1;color:#e8e8e8;transform:scaleX(0.8705);white-space:pre;">TE: 10 TR: 81.8</span>
<span style="position:absolute;right:15.30px;transform-origin:100% 50%;top:649.20px;font-size:6.2px;line-height:1;color:#e8e8e8;transform:scaleX(0.9365);white-space:pre;">2021-11-09  20:58:48.328</span>
<span style="position:absolute;left:1077.90px;transform-origin:0 50%;top:364.30px;font-size:5.6px;line-height:1;color:#e8e8e8;white-space:pre;">S</span>
<span style="position:absolute;left:1078.90px;transform-origin:0 50%;top:652.70px;font-size:5.6px;line-height:1;color:#e8e8e8;white-space:pre;">I</span>
<span style="position:absolute;left:781.60px;transform-origin:0 50%;top:508.70px;font-size:5.6px;line-height:1;color:#e8e8e8;white-space:pre;">R</span>
<span style="position:absolute;left:1373.60px;transform-origin:0 50%;top:508.70px;font-size:5.6px;line-height:1;color:#e8e8e8;white-space:pre;">L</span>
<span style="position:absolute;left:1356.46px;transform-origin:50% 50%;top:471.10px;font-size:5.8px;line-height:1;color:#e8e8e8;white-space:pre;">144</span>
<span style="position:absolute;left:1359.69px;transform-origin:50% 50%;top:544.90px;font-size:5.8px;line-height:1;color:#e8e8e8;white-space:pre;">7</span>
<span style="position:absolute;left:798.60px;transform-origin:0 50%;top:413.20px;font-size:25.9px;line-height:1;color:#f00;transform:scaleX(1.0591);white-space:pre;">3D)</span>
<span style="position:absolute;left:802.10px;transform-origin:0 50%;top:612.10px;font-size:26px;line-height:1;color:#ff0;transform:scaleX(1.0587);white-space:pre;">Coronal</span>
<div style="position:absolute;left:779.00px;top:659.80px;width:601.00px;height:5.90px;background:linear-gradient(#222,#3c3c3c);"></div>
<div style="position:absolute;left:1214.20px;top:659.80px;width:158.90px;height:5.90px;background:linear-gradient(#a8a8a8,#909090);"></div>
<div style="position:absolute;left:779.30px;top:659.80px;width:6.20px;height:5.90px;background:#4c4c4c;box-shadow:inset 0 0 0 0.6px #5e5e5e"></div>
<div style="position:absolute;left:781.50px;top:661.90px;width:1.70px;height:1.70px;background:#eee;"></div>
<div style="position:absolute;left:1373.40px;top:659.80px;width:6.20px;height:5.90px;background:#4c4c4c;box-shadow:inset 0 0 0 0.6px #5e5e5e"></div>
<div style="position:absolute;left:1375.60px;top:661.90px;width:1.70px;height:1.70px;background:#eee;"></div>
<svg width="0" height="0" style="position:absolute"><defs><linearGradient id="icg" x1="0" y1="0" x2="0" y2="1"><stop offset="0" stop-color="#7c7c7c"/><stop offset="0.3" stop-color="#f0f0f0"/><stop offset="1" stop-color="#fafafa"/></linearGradient></defs></svg>
<svg style="position:absolute;left:28px;top:4px" width="80" height="16" viewBox="28 4 80 16">
<g fill="none" stroke="#fff" stroke-width="1.65" stroke-linejoin="miter">
<path d="M32.6 9.2V16.9M32.6 13.1H39M38.9 9.2V16.9"/>
<path d="M39 9.9H45.6M40.5 13.1H45.4M39 16.2H45.6"/>
<path d="M46.3 16.9L50.2 9.8L54.1 16.9"/>
<path d="M55 16.9V9.9H60.4Q62 9.9 62 11.5Q62 13.1 60.4 13.1H55.6M58.3 13.1L62 16.9"/>
<path d="M62.4 9.9H69.2M65.8 9.9V16.9"/>
<path d="M68.2 9.3L72.3 16.4L76.4 9.3"/>
<path d="M78.3 9.6V16.9"/>
<path d="M86.2 9.9H81.4Q80 9.9 80 11.5Q80 13.1 81.4 13.1H84.9Q86.3 13.1 86.3 14.7Q86.3 16.2 84.9 16.2H79.8"/>
<path d="M86.6 9.9H92.8M89.6 9.9V16.9"/>
</g>
<path d="M92.3 16.9L97 9.6L100.4 15.7Q101.9 18 103.2 14.6" fill="none" stroke="#e3182a" stroke-width="1.5"/>
<circle cx="78.3" cy="7.3" r="0.95" fill="#e3182a"/>
</svg>
<div style="position:absolute;left:13.90px;top:23.40px;width:106.80px;height:14.40px;background:linear-gradient(#5c5c5c,#474747);"></div>
<svg style="position:absolute;left:14px;top:24.3px" width="13" height="13" viewBox="-6.5 -6.5 13 13">
<circle r="6" fill="#d9c6c8"/><circle r="5.2" fill="#bf0a20"/>
<path d="M-2.4 -2.4L2.4 2.4M2.4 -2.4L-2.4 2.4" stroke="#fff" stroke-width="1.6" stroke-linecap="round"/></svg>
<span style="position:absolute;left:27.80px;transform-origin:0 50%;top:27.40px;font-size:7.2px;line-height:1;color:#e6e6e6;font-weight:700;transform:scaleX(0.9132);white-space:pre;">Close Protocol</span>
<div style="position:absolute;left:13.70px;top:37.80px;width:106.70px;height:572.50px;background:#1f1f1f;"></div>
<span style="position:absolute;left:21.80px;transform-origin:0 50%;top:47.80px;font-size:6.5px;line-height:1;color:#b8982a;white-space:pre;">Stealth</span>
<div style="position:absolute;left:21.30px;top:55.30px;width:99.40px;height:14.80px;background:#272727;"></div>
<div style="position:absolute;left:22.10px;top:56.00px;width:85.10px;height:13.30px;background:linear-gradient(#d2d2d2,#a9a9a9);border-radius:1px"></div>
<span style="position:absolute;left:24.00px;transform-origin:0 50%;top:60.40px;font-size:6.6px;line-height:1;color:#1e1e1e;transform:scaleX(0.8960);white-space:pre;-webkit-text-stroke:0.15px #1e1e1e;">2d fse gre</span>
<svg style="position:absolute;left:94.3px;top:56.7px" width="12" height="12" viewBox="-6 -6 12 12">
<circle r="5.4" fill="#1a1a1a"/><circle r="4.3" fill="#e3c44c"/>
<line x1="-2.6" y1="-2.4" x2="2.6" y2="2.4" stroke="#a01818" stroke-width="1.6" stroke-linecap="round"/></svg>
<svg style="position:absolute;left:108.50px;top:56.50px" width="12.4" height="12.4" viewBox="-6.2 -6.2 12.4 12.4"><circle r="5.2" fill="#0e0e0e"/><circle r="4.3" fill="url(#icg)"/><path d="M-2.6 -2.8080000000000003 L2.3920000000000003 0 L-2.6 2.8080000000000003 Z" fill="#111"/></svg>
<span style="position:absolute;left:21.80px;transform-origin:0 50%;top:264.60px;font-size:6.5px;line-height:1;color:#b8982a;transform:scaleX(0.9906);white-space:pre;">Calibrations</span>
<div style="position:absolute;left:21.10px;top:272.10px;width:99.60px;height:43.90px;background:#272727;box-shadow:inset 0 0 0 0.6px #303030"></div>
<span style="position:absolute;left:23.90px;transform-origin:0 50%;top:277.70px;font-size:6.2px;line-height:1;color:#cfcfcf;transform:scaleX(0.9419);white-space:pre;">Center Frequency Tuning</span>
<svg style="position:absolute;left:94.30px;top:273.80px" width="12.4" height="12.4" viewBox="-6.2 -6.2 12.4 12.4"><circle r="5.2" fill="#0e0e0e"/><circle r="4.3" fill="url(#icg)"/><line x1="-2.9120000000000004" y1="-2.496" x2="2.6" y2="2.2880000000000003" stroke="#3a3a3a" stroke-width="1.5" stroke-linecap="round"/></svg>
<svg style="position:absolute;left:108.50px;top:273.80px" width="12.4" height="12.4" viewBox="-6.2 -6.2 12.4 12.4"><circle r="5.2" fill="#0e0e0e"/><circle r="4.3" fill="url(#icg)"/><path d="M-2.6 -2.8080000000000003 L2.3920000000000003 0 L-2.6 2.8080000000000003 Z" fill="#111"/></svg>
<span style="position:absolute;left:23.90px;transform-origin:0 50%;top:291.70px;font-size:6.2px;line-height:1;color:#cfcfcf;transform:scaleX(0.9364);white-space:pre;">System Tuning</span>
<svg style="position:absolute;left:94.30px;top:287.80px" width="12.4" height="12.4" viewBox="-6.2 -6.2 12.4 12.4"><circle r="5.2" fill="#0e0e0e"/><circle r="4.3" fill="url(#icg)"/><line x1="-2.9120000000000004" y1="-2.496" x2="2.6" y2="2.2880000000000003" stroke="#3a3a3a" stroke-width="1.5" stroke-linecap="round"/></svg>
<svg style="position:absolute;left:108.50px;top:287.80px" width="12.4" height="12.4" viewBox="-6.2 -6.2 12.4 12.4"><circle r="5.2" fill="#0e0e0e"/><circle r="4.3" fill="url(#icg)"/><path d="M-2.6 -2.8080000000000003 L2.3920000000000003 0 L-2.6 2.8080000000000003 Z" fill="#111"/></svg>
<span style="position:absolute;left:23.90px;transform-origin:0 50%;top:305.70px;font-size:6.2px;line-height:1;color:#cfcfcf;transform:scaleX(0.9675);white-space:pre;">Thermometry Shimming</span>
<svg style="position:absolute;left:94.30px;top:301.80px" width="12.4" height="12.4" viewBox="-6.2 -6.2 12.4 12.4"><circle r="5.2" fill="#0e0e0e"/><circle r="4.3" fill="url(#icg)"/><line x1="-2.9120000000000004" y1="-2.496" x2="2.6" y2="2.2880000000000003" stroke="#3a3a3a" stroke-width="1.5" stroke-linecap="round"/></svg>
<svg style="position:absolute;left:108.50px;top:301.80px" width="12.4" height="12.4" viewBox="-6.2 -6.2 12.4 12.4"><circle r="5.2" fill="#0e0e0e"/><circle r="4.3" fill="url(#icg)"/><path d="M-2.6 -2.8080000000000003 L2.3920000000000003 0 L-2.6 2.8080000000000003 Z" fill="#111"/></svg>
<span style="position:absolute;left:21.80px;transform-origin:0 50%;top:510.40px;font-size:6.5px;line-height:1;color:#b8982a;white-space:pre;">Protocol Settings</span>
<div style="position:absolute;left:21.10px;top:517.10px;width:99.60px;height:85.80px;background:#272727;box-shadow:inset 0 0 0 0.6px #303030"></div>
<span style="position:absolute;left:22.90px;transform-origin:0 50%;top:525.50px;font-size:6.2px;line-height:1;color:#cfcfcf;transform:scaleX(0.9697);white-space:pre;">Breath Hold Preparation</span>
<div style="position:absolute;left:89.30px;top:519.30px;width:18.80px;height:16.70px;background:#1d1d1d;"></div>
<span style="position:absolute;left:91.30px;transform-origin:0 50%;top:526.50px;font-size:5.9px;line-height:1;color:#cfcfcf;white-space:pre;">1 s</span>
<span style="position:absolute;left:22.90px;transform-origin:0 50%;top:544.50px;font-size:6.2px;line-height:1;color:#cfcfcf;transform:scaleX(0.9530);white-space:pre;">Breath Hold Recovery</span>
<div style="position:absolute;left:81.40px;top:538.30px;width:26.70px;height:16.70px;background:#1d1d1d;"></div>
<span style="position:absolute;left:83.50px;transform-origin:0 50%;top:545.50px;font-size:5.9px;line-height:1;color:#cfcfcf;white-space:pre;">15 s</span>
<div style="position:absolute;left:109.00px;top:519.30px;width:11.00px;height:16.70px;background:#5a5a5a;box-shadow:inset 0 0 0 0.6px #6a6a6a"></div>
<svg style="position:absolute;left:109px;top:519.3px" width="11" height="16.7" viewBox="0 0 11 16.7"><path d="M2.2 6.8L5.5 3.2L8.8 6.8Z M2.2 9.9L5.5 13.5L8.8 9.9Z" fill="#c8c8c8"/></svg>
<div style="position:absolute;left:109.00px;top:538.30px;width:11.00px;height:16.70px;background:#5a5a5a;box-shadow:inset 0 0 0 0.6px #6a6a6a"></div>
<svg style="position:absolute;left:109px;top:538.3px" width="11" height="16.7" viewBox="0 0 11 16.7"><path d="M2.2 6.8L5.5 3.2L8.8 6.8Z M2.2 9.9L5.5 13.5L8.8 9.9Z" fill="#c8c8c8"/></svg>
<div style="position:absolute;left:23.30px;top:557.10px;width:11.00px;height:10.80px;background:#1e1e1e;"></div>
<span style="position:absolute;left:39.30px;transform-origin:0 50%;top:560.40px;font-size:6.2px;line-height:1;color:#cfcfcf;transform:scaleX(0.9747);white-space:pre;">Auto Breath Hold Instructions</span>
<div style="position:absolute;left:23.30px;top:570.00px;width:11.00px;height:10.70px;background:#1e1e1e;"></div>
<span style="position:absolute;left:39.30px;transform-origin:0 50%;top:573.40px;font-size:6.2px;line-height:1;color:#cfcfcf;transform:scaleX(0.9895);white-space:pre;">Automatically start next App</span>
<span style="position:absolute;left:22.90px;transform-origin:0 50%;top:583.70px;font-size:6.2px;line-height:1;color:#cfcfcf;transform:scaleX(0.9445);white-space:pre;">Auto-Voice Language</span>
<div style="position:absolute;left:23.30px;top:591.10px;width:96.70px;height:10.30px;background:linear-gradient(#5c5c5c,#464646);box-shadow:inset 0 0 0 0.6px #5c5c5c"></div>
<span style="position:absolute;left:25.00px;transform-origin:0 50%;top:594.00px;font-size:6.8px;line-height:1;color:#e6e6e6;transform:scaleX(0.9819);white-space:pre;">English</span>
<svg style="position:absolute;left:107px;top:593px" width="9" height="7" viewBox="0 0 9 7"><path d="M1 1.6H8L4.5 5.6Z" fill="#ddd"/></svg>
<span style="position:absolute;left:13.90px;transform-origin:0 50%;top:622.20px;font-size:6.8px;line-height:1;color:#cfcfcf;transform:scaleX(0.9355);white-space:pre;">Timers</span>
<svg style="position:absolute;left:111px;top:619px" width="11" height="10" viewBox="111 619 11 10"><path d="M112.2 623.9H120.4M116.3 619.8V628" stroke="#e2e2e2" stroke-width="1.5"/></svg>
<div style="position:absolute;left:13.70px;top:633.10px;width:107.00px;height:55.00px;background:#1f1f1f;"></div>
<span style="position:absolute;left:13.90px;transform-origin:0 50%;top:700.20px;font-size:6.8px;line-height:1;color:#cfcfcf;transform:scaleX(0.9798);white-space:pre;">Activity</span>
<div style="position:absolute;left:13.70px;top:708.00px;width:107.00px;height:65.00px;background:#1f1f1f;"></div>
<div style="position:absolute;left:14.00px;top:708.00px;width:105.70px;height:16.40px;background:#2f2f2f;box-shadow:inset 0.6px 0.6px 0 0 #444"></div>
<span style="position:absolute;left:18.30px;transform-origin:0 50%;top:711.00px;font-size:6.2px;line-height:1;color:#cfcfcf;transform:scaleX(0.9416);white-space:pre;">Shimming ROI not set</span>
<svg style="position:absolute;left:108.4px;top:712.3px" width="8" height="8" viewBox="-4 -4 8 8">
<circle r="3.5" fill="#eee"/><path d="M-1.6 -1.6L1.6 1.6M1.6 -1.6L-1.6 1.6" stroke="#1a1a1a" stroke-width="0.9"/></svg>
</body></html>
